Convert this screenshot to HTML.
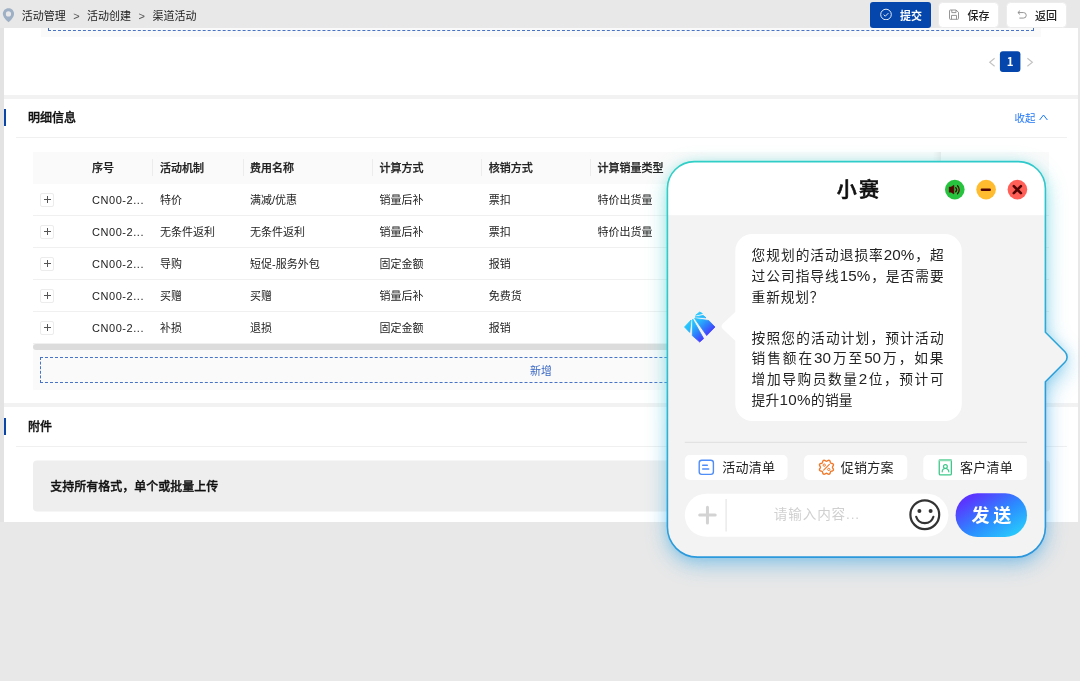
<!DOCTYPE html>
<html lang="zh-CN">
<head>
<meta charset="utf-8">
<title>渠道活动</title>
<style>
*{box-sizing:border-box;margin:0;padding:0}
html,body{width:1080px;height:681px;overflow:hidden}
body{background:#e8e8e8;font-family:"Liberation Sans","Noto Sans CJK SC",sans-serif;color:#1f1f1f;position:relative;font-size:11px}
.abs{position:absolute}
.t{position:absolute;white-space:nowrap;line-height:16px;height:16px}
/* top bar */
#crumb{left:21.800px;top:8px;font-size:11px;color:#222}
#crumb i{font-style:normal;color:#555;margin:0 7.45px 0 7.45px}
.btn{position:absolute;top:2px;height:26px;border-radius:3px;font-size:11px;line-height:26px;white-space:nowrap}
.btn span{position:absolute;top:0}
/* cards */
.card{position:absolute;left:4px;width:1074px;background:#fff;overflow:hidden}
.bar{position:absolute;left:0;width:2px;background:#0a46a8}
.h{position:absolute;left:24px;font-weight:500;-webkit-text-stroke:0.350px #111;font-size:12px;line-height:16px;color:#111}
.hr{position:absolute;left:12px;width:1051px;height:1px;background:#f0f0f0}
/* table */
.th{position:absolute;top:0;height:32px;line-height:32px;font-weight:500;-webkit-text-stroke:0.250px #222;font-size:11px;color:#222;white-space:nowrap}
.sep{position:absolute;top:6.500px;width:1px;height:17px;background:#ececec}
.row{position:absolute;left:0;width:1016px;height:32px;border-bottom:1px solid #f0f0f0;background:#fff}
.row span{position:absolute;top:1px;line-height:31px;font-size:11px;color:#222;white-space:nowrap}
.row b{position:absolute;left:7.400px;top:8.600px;width:14px;height:14px;border:1px solid #ececec;border-radius:2px;background:#fff}
.row b:before{content:"";position:absolute;left:2.500px;top:5.500px;width:7px;height:1px;background:#555}
.row b:after{content:"";position:absolute;left:5.500px;top:2.500px;width:1px;height:7px;background:#555}
.c1{left:59px}.c2{left:127px}.c3{left:217px}.c4{left:346.600px}.c5{left:455.800px}.c6{left:564.500px}
/* chat */
.msg{font-size:13.700px;color:#222}
.msg p{height:20.630px;line-height:20.630px;white-space:nowrap;letter-spacing:0.850px}
.msg .n{font-size:15.200px;line-height:1px}
.msg p.j{text-align:justify;text-align-last:justify;white-space:normal;letter-spacing:0}
#chat{position:absolute;left:0;top:0;width:1080px;height:681px;font-family:"Liberation Sans","Noto Sans CJK SC",sans-serif}
.ct{top:455px;height:25px;line-height:25px;font-size:13px;letter-spacing:0.250px;color:#222}
</style>
</head>
<body>
<div id="root" style="position:absolute;left:0;top:0;width:1080px;height:681px;will-change:transform">

<!-- ===== top bar ===== -->
<svg class="abs" style="left:2px;top:8px" width="12" height="15" viewBox="-0.450 0 12 15"><path d="M6 0.200C2.900 0.200 0.400 2.650 0.400 5.750c0 3.500 4 7.200 5.600 8.400 1.600-1.200 5.600-4.900 5.600-8.400C11.600 2.650 9.100 0.200 6 0.200z" fill="#9eb0c6"/><circle cx="6" cy="5.950" r="2.600" fill="#e8e8e8"/></svg>
<div class="t" id="crumb">活动管理<i>&gt;</i>活动创建<i>&gt;</i>渠道活动</div>

<div class="btn" style="left:870px;width:61px;background:#0446ab;color:#fff;font-weight:700">
  <svg class="abs" style="left:10px;top:6px" width="12" height="12" viewBox="0 -0.500 12 12"><circle cx="6" cy="6" r="5.300" fill="none" stroke="#fff" stroke-width="0.900"/><path d="M3.700 6.200l1.600 1.500 3.100-3.100" fill="none" stroke="#fff" stroke-width="0.900"/></svg>
  <span style="left:30px;top:1.200px">提交</span>
</div>
<div class="btn" style="left:938px;top:2px;width:61px;height:26px;background:#fff;border:1px solid #ececec;border-radius:4.500px;color:#222;font-weight:500">
  <svg class="abs" style="left:10px;top:6px" width="10" height="11" viewBox="0 -0.500 10 11"><path d="M1.300 0.500h5.700l2.500 2.300v6.200a0.800 0.800 0 0 1-0.800 0.800h-7.400a0.800 0.800 0 0 1-0.800-0.800v-7.700a0.800 0.800 0 0 1 0.800-0.800z" fill="none" stroke="#8a8a8a" stroke-width="0.900"/><path d="M2.800 0.500v2.600h4.200v-2.600M2.500 9.800v-3.900h5v3.900" fill="none" stroke="#8a8a8a" stroke-width="0.900"/></svg>
  <span style="left:28.400px;top:1.900px;line-height:23px">保存</span>
</div>
<div class="btn" style="left:1006px;top:2px;width:61px;height:26px;background:#fff;border:1px solid #ececec;border-radius:4.500px;color:#222;font-weight:500">
  <svg class="abs" style="left:10px;top:7px" width="10.500" height="9.500" viewBox="0 0 11 10"><path d="M3.200 0.600L0.900 2.700l2.300 2.100M1 2.700h5.800a2.900 2.900 0 0 1 0 5.800H2.500" fill="none" stroke="#8a8a8a" stroke-width="0.950"/></svg>
  <span style="left:28px;top:1.900px;line-height:23px">返回</span>
</div>

<div class="abs" style="left:0;top:28px;width:4px;height:494px;background:#e3e3e3"></div>
<!-- ===== card 1 ===== -->
<div class="card" style="top:28px;height:67px">
  <div class="abs" style="left:37px;top:0;width:1000px;height:9px;background:#fafafa"></div>
  <div class="abs" style="left:44px;top:-8px;width:986px;height:11px;border:1px dashed #4673c8;border-top:none"></div>
  <svg class="abs" style="left:976px;top:16px" width="70" height="36" viewBox="980 44 70 36">
    <rect x="999.900" y="51.200" width="20.500" height="20.800" rx="3" fill="#0446ab"/>
    <text x="1010.100" y="66.100" text-anchor="middle" font-family="'Noto Sans CJK SC','Liberation Sans',sans-serif" font-weight="700" font-size="11.500" fill="#fff">1</text>
    <path d="M994.600 58.300L989.700 62.300l4.900 4" fill="none" stroke="#c2c2c2" stroke-width="1.100"/>
    <path d="M1027.400 58.300l5 4-5 4" fill="none" stroke="#c2c2c2" stroke-width="1.100"/>
  </svg>
</div>
<div class="abs" style="left:4px;top:95px;width:1074px;height:4px;background:#f2f2f2"></div>

<!-- ===== card 2 : detail ===== -->
<div class="card" style="top:99px;height:304px">
  <div class="bar" style="top:10px;height:17px"></div>
  <div class="h" style="top:11px">明细信息</div>
  <div class="t" style="left:1010.400px;top:11px;font-size:10.500px;color:#2378f5">收起</div>
  <svg class="abs" style="left:1035px;top:15px" width="9" height="7" viewBox="0 0 9 7"><path d="M0.600 6L4.500 1l3.900 5" fill="none" stroke="#1677ff" stroke-width="1"/></svg>
  <div class="hr" style="top:38px"></div>

  <!-- table -->
  <div class="abs" style="left:29px;top:53px;width:1016px;height:238px;background:#fafafa">
    <div class="abs" style="left:0;top:0;width:1016px;height:32px;background:#fafafa"></div>
    <div class="th c1">序号</div><div class="sep" style="left:118.500px"></div>
    <div class="th c2">活动机制</div><div class="sep" style="left:209.500px"></div>
    <div class="th c3">费用名称</div><div class="sep" style="left:339px"></div>
    <div class="th c4">计算方式</div><div class="sep" style="left:448px"></div>
    <div class="th c5">核销方式</div><div class="sep" style="left:556.500px"></div>
    <div class="th c6">计算销量类型</div>

    <div class="row" style="top:32px"><b></b><span class="c1" style="letter-spacing:0.550px">CN00-2...</span><span class="c2">特价</span><span class="c3">满减/优惠</span><span class="c4">销量后补</span><span class="c5">票扣</span><span class="c6">特价出货量</span></div>
    <div class="row" style="top:64px"><b></b><span class="c1" style="letter-spacing:0.550px">CN00-2...</span><span class="c2">无条件返利</span><span class="c3">无条件返利</span><span class="c4">销量后补</span><span class="c5">票扣</span><span class="c6">特价出货量</span></div>
    <div class="row" style="top:96px"><b></b><span class="c1" style="letter-spacing:0.550px">CN00-2...</span><span class="c2">导购</span><span class="c3">短促-服务外包</span><span class="c4">固定金额</span><span class="c5">报销</span></div>
    <div class="row" style="top:128px"><b></b><span class="c1" style="letter-spacing:0.550px">CN00-2...</span><span class="c2">买赠</span><span class="c3">买赠</span><span class="c4">销量后补</span><span class="c5">免费货</span></div>
    <div class="row" style="top:160px"><b></b><span class="c1" style="letter-spacing:0.550px">CN00-2...</span><span class="c2">补损</span><span class="c3">退损</span><span class="c4">固定金额</span><span class="c5">报销</span></div>
    <!-- fixed column shadow -->
    <div class="abs" style="left:900px;top:0;width:8px;height:192px;background:linear-gradient(90deg,rgba(0,0,0,0),rgba(0,0,0,.06))"></div>
    <div class="abs" style="left:908px;top:0;width:108px;height:32px;background:#fafafa"></div>
    <!-- scrollbar -->
    <div class="abs" style="left:0;top:192px;width:1016px;height:6px;background:#dcdcdc;border-radius:3px"></div>
    <!-- add -->
    <div class="abs" style="left:7px;top:205px;width:1002px;height:26px;border:1px dashed #4673c8"></div>
    <div class="t" style="left:497px;top:211px;font-size:11px;color:#3a68c4">新增</div>
  </div>
</div>
<div class="abs" style="left:4px;top:403px;width:1074px;height:4px;background:#f2f2f2"></div>

<!-- ===== card 3 : attachment ===== -->
<div class="card" style="top:407px;height:115px">
  <div class="bar" style="top:11px;height:17px"></div>
  <div class="h" style="top:12px">附件</div>
  <div class="hr" style="top:39px"></div>
  <div class="abs" style="left:29px;top:53px;width:1017px;height:51px;background:#eeeeee;border-radius:4px;transform:translateY(0.4px)"></div>
  <div class="t" style="left:46.300px;top:72px;font-size:12px;font-weight:500;-webkit-text-stroke:0.350px #111;color:#111">支持所有格式，单个或批量上传</div>
</div>

<!-- ===== chat panel ===== -->
<div id="chat">
  <svg class="abs" style="left:0;top:0" width="1080" height="681" viewBox="0 0 1080 681">
    <defs>
      <linearGradient id="gb" gradientUnits="userSpaceOnUse" x1="668" y1="162" x2="856.300" y2="632.700"><stop offset="0" stop-color="#30cfc6"/><stop offset="0.300" stop-color="#2fc8cc"/><stop offset="0.720" stop-color="#2b9adc"/><stop offset="1" stop-color="#2b96dc"/></linearGradient>
      <linearGradient id="gg" gradientUnits="userSpaceOnUse" x1="668" y1="162" x2="856.300" y2="632.700"><stop offset="0" stop-color="#62d6d0"/><stop offset="0.300" stop-color="#5ed2da"/><stop offset="0.720" stop-color="#5ab4e6"/><stop offset="1" stop-color="#5aaee4"/></linearGradient>
      <linearGradient id="gs" x1="0" y1="0" x2="1" y2="1"><stop offset="0.150" stop-color="#5a35ff"/><stop offset="0.550" stop-color="#2b8cff"/><stop offset="0.950" stop-color="#27d2fb"/></linearGradient>
      <linearGradient id="gd" gradientUnits="userSpaceOnUse" x1="-9" y1="-9" x2="8" y2="10"><stop offset="0" stop-color="#25ccff"/><stop offset="0.300" stop-color="#27b8fb"/><stop offset="0.650" stop-color="#2f78fb"/><stop offset="1" stop-color="#4a2cff"/></linearGradient>
      <filter id="glow" x="-10%" y="-10%" width="120%" height="120%"><feGaussianBlur stdDeviation="5"/></filter>
      <filter id="glow2" x="-10%" y="-10%" width="120%" height="120%"><feGaussianBlur stdDeviation="10.500"/></filter>
      <clipPath id="cp"><path id="pp" d="M694.400 161.600H1018.400a27 27 0 0 1 27 27V332.200l19.500 19.500a7.500 7.500 0 0 1 0 10.600L1045.400 381.800V527.100a30 30 0 0 1-30 30H697.400a30 30 0 0 1-30-30V188.600a27 27 0 0 1 27-27z"/></clipPath>
    </defs>
    <!-- glow -->
    <use href="#pp" fill="url(#gg)" opacity="0.680" filter="url(#glow2)" transform="translate(0,7)"/>
    <use href="#pp" fill="url(#gb)" opacity="0.200" filter="url(#glow)"/>
    <!-- body -->
    <use href="#pp" fill="#f3f3f3"/>
    <rect x="660" y="160" width="400" height="55.200" fill="#fff" clip-path="url(#cp)"/>
    <use href="#pp" fill="none" stroke="url(#gb)" stroke-width="1.600"/>
    <!-- window buttons -->
    <circle cx="954.800" cy="189.600" r="9.800" fill="#27c33f"/>
    <circle cx="986.100" cy="189.600" r="9.800" fill="#febc2e"/>
    <circle cx="1017.400" cy="189.600" r="9.800" fill="#ff5f57"/>
    <path d="M949.200 187h1.900l2.800-1.800v8.800l-2.800-1.800h-1.900z" fill="#500404" stroke="#500404" stroke-width="0.500" stroke-linejoin="round"/>
    <path d="M955.700 187.600a3 3 0 0 1 0 4.200M957.500 185.700a5.600 5.600 0 0 1 0 8" fill="none" stroke="#500404" stroke-width="1.300" stroke-linecap="round"/>
    <path d="M981.900 189.700h7.800" stroke="#500404" stroke-width="2.500" stroke-linecap="round"/>
    <path d="M1013.800 186.100l7.100 7.100M1020.900 186.100l-7.100 7.100" stroke="#500404" stroke-width="2.600" stroke-linecap="round"/>
    <!-- bubble -->
    <rect x="735.300" y="234" width="226.500" height="187" rx="17" fill="#fff"/>
    <path d="M736 311.200v30.200l-13.200-12.500a3.700 3.700 0 0 1 0-5.200z" fill="#fff"/>
    <!-- avatar -->
    <g transform="translate(700 327)" fill="url(#gd)" stroke="url(#gd)" stroke-width="0.800" stroke-linejoin="round">
      <path d="M-15.500 0L-8.900 -7L-10.300 5.400z"/>
      <path d="M-7.300 -7.900L3.600 11.600L-0.300 15L-7.700 8.600z"/>
      <path d="M-5.400 -8.600L8.700 -6.500L15 0L6.700 8.500z"/>
      <path d="M-5 -10L3.200 -11.600L6 -9.200z"/>
      <path d="M-4.300 -11.800L-0.300 -15L2.400 -13.500z"/>
    </g>
    <!-- chips -->
    <rect x="684.800" y="455" width="102.800" height="24.900" rx="5" fill="#fff"/>
    <rect x="804" y="455" width="103.300" height="24.900" rx="5" fill="#fff"/>
    <rect x="923.300" y="455" width="103.500" height="24.900" rx="5" fill="#fff"/>
    <rect x="699.200" y="460.200" width="14.200" height="14.200" rx="2.600" fill="none" stroke="#4f8df8" stroke-width="1.400"/>
    <path d="M702.700 465.300h4.600M702.700 469h6" stroke="#4f8df8" stroke-width="1.500" stroke-linecap="round"/>
    <path d="M833.38 470.12 L833.09 470.52 L832.62 470.81 L832.06 471.00 L831.51 471.13 L831.04 471.27 L830.69 471.49 L830.47 471.84 L830.33 472.31 L830.20 472.86 L830.01 473.42 L829.72 473.89 L829.32 474.18 L828.83 474.26 L828.29 474.13 L827.77 473.87 L827.28 473.57 L826.85 473.34 L826.45 473.25 L826.05 473.34 L825.62 473.57 L825.13 473.87 L824.61 474.13 L824.07 474.26 L823.58 474.18 L823.18 473.89 L822.89 473.42 L822.70 472.86 L822.57 472.31 L822.43 471.84 L822.21 471.49 L821.86 471.27 L821.39 471.13 L820.84 471.00 L820.28 470.81 L819.81 470.52 L819.52 470.12 L819.44 469.63 L819.57 469.09 L819.83 468.57 L820.13 468.08 L820.36 467.65 L820.45 467.25 L820.36 466.85 L820.13 466.42 L819.83 465.93 L819.57 465.41 L819.44 464.87 L819.52 464.38 L819.81 463.98 L820.28 463.69 L820.84 463.50 L821.39 463.37 L821.86 463.23 L822.21 463.01 L822.43 462.66 L822.57 462.19 L822.70 461.64 L822.89 461.08 L823.18 460.61 L823.58 460.32 L824.07 460.24 L824.61 460.37 L825.13 460.63 L825.62 460.93 L826.05 461.16 L826.45 461.25 L826.85 461.16 L827.28 460.93 L827.77 460.63 L828.29 460.37 L828.83 460.24 L829.32 460.32 L829.72 460.61 L830.01 461.08 L830.20 461.64 L830.33 462.19 L830.47 462.66 L830.69 463.01 L831.04 463.23 L831.51 463.37 L832.06 463.50 L832.62 463.69 L833.09 463.98 L833.38 464.38 L833.46 464.87 L833.33 465.41 L833.07 465.93 L832.77 466.42 L832.54 466.85 L832.45 467.25 L832.54 467.65 L832.77 468.08 L833.07 468.57 L833.33 469.09 L833.46 469.63z" fill="none" stroke="#f07a2c" stroke-width="1.400" stroke-linejoin="round"/>
    <path d="M823.650 470.150l5.700-5.700" stroke="#f07a2c" stroke-width="1.200" stroke-linecap="round"/>
    <circle cx="824.250" cy="465.150" r="1.150" fill="none" stroke="#f07a2c" stroke-width="1"/>
    <circle cx="828.750" cy="469.450" r="1.150" fill="none" stroke="#f07a2c" stroke-width="1"/>
    <rect x="939.250" y="459.850" width="12.100" height="15" rx="1.200" fill="none" stroke="#3ec78a" stroke-width="1.300"/>
    <rect x="938.600" y="459.200" width="13.400" height="2.100" rx="0.800" fill="#8adcb4"/>
    <circle cx="945.400" cy="466.500" r="1.900" fill="none" stroke="#3ec78a" stroke-width="1.200"/>
    <path d="M942.200 471.800a3.300 3.300 0 0 1 6.600 0" fill="none" stroke="#3ec78a" stroke-width="1.200" stroke-linecap="round"/>
    <!-- divider -->
    <rect x="684.800" y="441.800" width="342.200" height="1.200" fill="#e2e2e2"/>
    <!-- input -->
    <rect x="684.800" y="493.700" width="263.600" height="43" rx="21.500" fill="#fff"/>
    <path d="M699.700 515.100h15.500M707.450 507.300v15.700" stroke="#d3d3d3" stroke-width="3" stroke-linecap="round"/>
    <rect x="725.500" y="499" width="1.200" height="32.500" fill="#e6e6e6"/>
    <circle cx="924.800" cy="514.700" r="14.400" fill="none" stroke="#333" stroke-width="2.200"/>
    <circle cx="919.400" cy="511" r="2" fill="#333"/><circle cx="930.600" cy="511" r="2" fill="#333"/>
    <path d="M916.200 516.800a9 9 0 0 0 17.200 0" fill="none" stroke="#333" stroke-width="2.200" stroke-linecap="round"/>
    <!-- send -->
    <rect x="955.600" y="493.300" width="71.400" height="43.700" rx="21.850" fill="url(#gs)"/>
  </svg>

  <div class="t" style="left:836.800px;top:175px;height:30px;line-height:30px;font-size:20px;letter-spacing:2.300px;font-weight:500;-webkit-text-stroke:0.600px #111;color:#111">小赛</div>

  <div class="abs msg" style="left:751.600px;top:246.300px;width:192px">
    <p class="j">您规划的活动退损率<span class="n">20%</span>，超</p>
    <p class="j">过公司指导线<span class="n">15%</span>，是否需要</p>
    <p>重新规划？</p>
    <p>&nbsp;</p>
    <p class="j">按照您的活动计划，预计活动</p>
    <p class="j">销售额在<span class="n">30</span>万至<span class="n">50</span>万，如果</p>
    <p class="j">增加导购员数量<span class="n">2</span>位，预计可</p>
    <p style="letter-spacing:0.300px">提升<span class="n">10%</span>的销量</p>
  </div>

  <!-- chips text -->
  <div class="t ct" style="left:722.300px">活动清单</div>
  <div class="t ct" style="left:840.700px">促销方案</div>
  <div class="t ct" style="left:959.900px">客户清单</div>

  <div class="t" style="left:773.800px;top:505px;height:20px;line-height:20px;font-size:13.600px;letter-spacing:0.850px;color:#d0d0d0">请输入内容...</div>
  <div class="t" style="left:971.500px;top:501px;height:30px;line-height:30px;font-size:18px;letter-spacing:3.800px;font-weight:700;color:#fff">发送</div>
</div>

</div>
</body>
</html>
